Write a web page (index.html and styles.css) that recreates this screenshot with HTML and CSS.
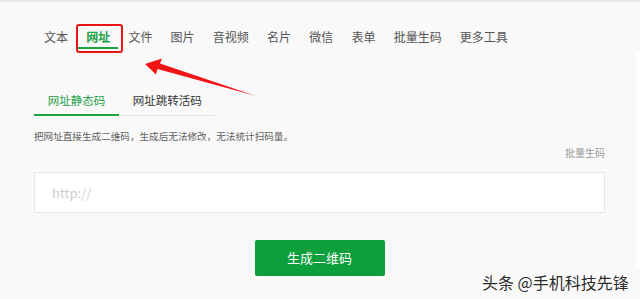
FILE: index.html
```html
<!DOCTYPE html>
<html lang="zh">
<head>
<meta charset="utf-8">
<link rel="stylesheet" href="styles.css">
</head>
<body>
<div class="topshade"></div>
<div class="page">
  <div class="main">
    <nav class="nav">
      <span class="nav-item">文本</span>
      <span class="nav-item active">网址<span class="mark"></span></span>
      <span class="nav-item">文件</span>
      <span class="nav-item">图片</span>
      <span class="nav-item">音视频</span>
      <span class="nav-item">名片</span>
      <span class="nav-item">微信</span>
      <span class="nav-item">表单</span>
      <span class="nav-item">批量生码</span>
      <span class="nav-item">更多工具</span>
    </nav>
    <div class="subtabs">
      <span class="subtab active">网址静态码</span>
      <span class="subtab">网址跳转活码</span>
    </div>
    <p class="desc">把网址直接生成二维码，生成后无法修改，无法统计扫码量。</p>
    <div class="batch">批量生码</div>
    <div class="input">http://</div>
    <div class="btn-row"><span class="btn">生成二维码</span></div>
  </div>
  <div class="side"></div>
</div>
<svg class="arrow" width="640" height="299" viewBox="0 0 640 299">
  <polygon points="145,64 162,58.5 160,63.5 256,96 157.5,69 156,74.5" fill="#f01414"/>
</svg>
<div class="watermark">头条 @手机科技先锋</div>
</body>
</html>
```
FILE: styles.css
```css
html, body {
  margin: 0;
  padding: 0;
}
body {
  width: 640px;
  height: 299px;
  background: #f9f9f9;
  font-family: "Noto Sans CJK SC", "Noto Sans", sans-serif;
  position: relative;
  overflow: hidden;
}
.topshade {
  height: 3px;
  background: linear-gradient(#e4e4e4, #f9f9f9);
}
.page {
  display: flex;
}
.main {
  width: 571px;
  padding-left: 34px;
}
.side {
  width: 4px;
  margin-left: 31px;
  margin-top: 50px;
  height: 214px;
  background: #fff;
}
.nav {
  display: flex;
  gap: 18.2px;
  padding-left: 10px;
  margin-top: 28px;
  font-size: 12px;
  line-height: 12px;
  color: #555;
}
.nav-item {
  position: relative;
  white-space: nowrap;
}
.nav-item.active {
  color: #1f9f45;
  font-weight: bold;
}
.nav-item.active::after {
  content: "";
  position: absolute;
  left: -8px;
  width: 40px;
  top: 16px;
  height: 2px;
  background: #1aa245;
}
.mark {
  position: absolute;
  left: -10px;
  top: -7px;
  width: 47px;
  height: 29px;
  box-sizing: border-box;
  border: 2px solid #e81515;
  border-radius: 3px;
}
.subtabs {
  display: flex;
  width: 181px;
  margin-top: 51px;
  border-bottom: 1px solid #e3e3e3;
}
.subtab {
  font-size: 11.5px;
  line-height: 12px;
  padding: 0 13.75px 8px;
  color: #333;
  white-space: nowrap;
  border-bottom: 2px solid transparent;
  margin-bottom: -1px;
}
.subtab.active {
  color: #23a046;
  border-bottom-color: #1aa63c;
}
.desc {
  margin: 14px 0 0;
  font-size: 9.6px;
  line-height: 12px;
  color: #5e5e5e;
  white-space: nowrap;
}
.batch {
  margin-top: 5px;
  text-align: right;
  font-size: 10px;
  line-height: 12px;
  color: #9a9a9a;
}
.input {
  margin-top: 13px;
  height: 41px;
  box-sizing: border-box;
  border: 1px solid #e6e6e6;
  background: #fff;
  padding-left: 17px;
  font-size: 13px;
  line-height: 39px;
  color: #cfcfcf;
}
.btn-row {
  display: flex;
  justify-content: center;
  margin-top: 27px;
}
.btn {
  width: 130px;
  height: 36px;
  background: #0c9f3b;
  border-radius: 2px;
  color: #fff;
  font-size: 13px;
  line-height: 36px;
  text-align: center;
}
.arrow {
  position: absolute;
  left: 0;
  top: 0;
  pointer-events: none;
}
.watermark {
  position: absolute;
  left: 482px;
  top: 272px;
  font-size: 16px;
  line-height: 20px;
  color: #2a2a2a;
  white-space: nowrap;
  text-shadow: 1px 0 #fff, -1px 0 #fff, 0 1px #fff, 0 -1px #fff;
}
```
